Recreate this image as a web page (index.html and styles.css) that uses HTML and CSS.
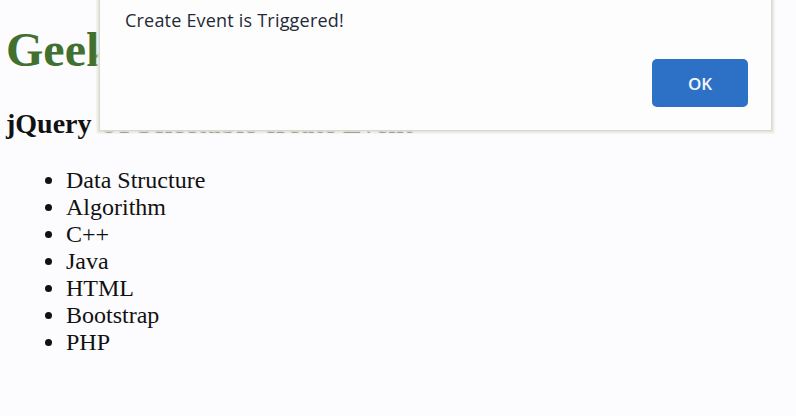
FILE: index.html
```html
<!DOCTYPE html>
<html>
<head>
<meta charset="utf-8">
<title>jQuery UI Selectable create Event</title>
<link rel="stylesheet" href="styles.css">
</head>
<body>
  <main class="page">
    <h1 class="title">GeeksforGeeks</h1>
    <h3 class="subtitle">jQuery UI Selectable create Event</h3>
    <ul class="list">
      <li>Data Structure</li>
      <li>Algorithm</li>
      <li>C++</li>
      <li>Java</li>
      <li>HTML</li>
      <li>Bootstrap</li>
      <li>PHP</li>
    </ul>
  </main>
  <div class="dialog" role="alertdialog">
    <p class="dialog-msg">Create Event is Triggered!</p>
    <div class="dialog-actions">
      <button class="dialog-ok">OK</button>
    </div>
  </div>
</body>
</html>
```

FILE: styles.css
```css
html, body {
  margin: 0;
  padding: 0;
}
body {
  background: #fcfcfe;
  font-family: "Liberation Serif", "Times New Roman", serif;
  color: #111;
  width: 796px;
  height: 416px;
  overflow: hidden;
  position: relative;
}
.page {
  padding: 0 6px;
}
.title {
  margin: 23px 0 0;
  font-size: 48px;
  line-height: 53px;
  font-weight: bold;
  color: #41702f;
}
.subtitle {
  margin: 32px 0 0;
  font-size: 28px;
  line-height: 31px;
  font-weight: bold;
}
.list {
  margin: 28px 0 0;
  padding-left: 60px;
  font-size: 24px;
  line-height: 27px;
}
.dialog {
  position: absolute;
  left: 100px;
  top: -10px;
  width: 671px;
  height: 140px;
  background: #fdfdfe;
  box-shadow: 0 0 0 1px #d6d9cc, 0 0 2px 3px #e4e6da;
  font-family: "Open Sans", "Noto Sans", sans-serif;
  box-sizing: border-box;
  padding: 17px 23px 0 25px;
}
.dialog-msg {
  margin: 0;
  font-size: 18px;
  line-height: 26px;
  color: #1f2a36;
  letter-spacing: 0.2px;
}
.dialog-actions {
  display: flex;
  justify-content: flex-end;
  margin-top: 26px;
}
.dialog-ok {
  width: 96px;
  height: 48px;
  border: none;
  border-radius: 5px;
  background: #2d71c6;
  color: #f4f6fb;
  font-family: "Open Sans", "Noto Sans", sans-serif;
  font-size: 17px;
  font-weight: 600;
  padding: 0;
}
```
